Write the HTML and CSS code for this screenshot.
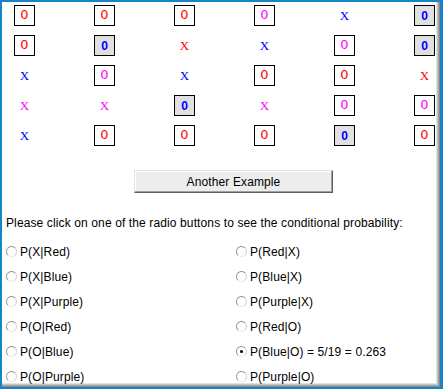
FILE: index.html
```html
<!DOCTYPE html>
<html lang="en">
<head>
    <meta charset="UTF-8">
    <title>Conditional Probability</title>
    <link rel="stylesheet" href="styles.css">
</head>
<body>
    <div class="frame">
        <div class="panel">
            <!-- board of symbols, 6 x 5 -->
            <div class="board">
                <span class="cell box r">O</span>
                <span class="cell box r">O</span>
                <span class="cell box r">O</span>
                <span class="cell box m">O</span>
                <span class="cell x b">X</span>
                <span class="cell box hl">0</span>

                <span class="cell box r">O</span>
                <span class="cell box hl">0</span>
                <span class="cell x r">X</span>
                <span class="cell x b">X</span>
                <span class="cell box m">O</span>
                <span class="cell box hl">0</span>

                <span class="cell x b">X</span>
                <span class="cell box m">O</span>
                <span class="cell x b">X</span>
                <span class="cell box r">O</span>
                <span class="cell box r">O</span>
                <span class="cell x r">X</span>

                <span class="cell x m">X</span>
                <span class="cell x m">X</span>
                <span class="cell box hl">0</span>
                <span class="cell x m">X</span>
                <span class="cell box m">O</span>
                <span class="cell box m">O</span>

                <span class="cell x b">X</span>
                <span class="cell box r">O</span>
                <span class="cell box r">O</span>
                <span class="cell box r">O</span>
                <span class="cell box hl">0</span>
                <span class="cell box r">O</span>
            </div>

            <button class="again">Another Example</button>

            <p class="prompt">Please click on one of the radio buttons to see the conditional probability:</p>

            <div class="choices">
                <label class="choice"><span class="radio"></span>P(X|Red)</label>
                <label class="choice"><span class="radio"></span>P(Red|X)</label>
                <label class="choice"><span class="radio"></span>P(X|Blue)</label>
                <label class="choice"><span class="radio"></span>P(Blue|X)</label>
                <label class="choice"><span class="radio"></span>P(X|Purple)</label>
                <label class="choice"><span class="radio"></span>P(Purple|X)</label>
                <label class="choice"><span class="radio"></span>P(O|Red)</label>
                <label class="choice"><span class="radio"></span>P(Red|O)</label>
                <label class="choice"><span class="radio"></span>P(O|Blue)</label>
                <label class="choice"><span class="radio checked"></span>P(Blue|O) = 5/19 = 0.263</label>
                <label class="choice"><span class="radio"></span>P(O|Purple)</label>
                <label class="choice"><span class="radio"></span>P(Purple|O)</label>
            </div>
        </div>
    </div>
</body>
</html>
```

FILE: styles.css
```css
html, body {
    margin: 0;
    padding: 0;
    background: #ffffff;
}

.frame {
    width: 443px;
    height: 389px;
    box-sizing: border-box;
    border-top: 2px solid #1883c6;
    border-left: 2px solid #1883c6;
    border-right: 3px solid #1883c6;
    border-bottom: 2px solid #1883c6;
    overflow: hidden;
}

.panel {
    height: 100%;
    background: #ffffff;
    box-shadow: inset -1px -1px 0 #8a8a8a, inset -2px -2px 0 #a6a6a6,
                inset -3px -3px 0 #c4c4c4, inset -4px -4px 0 #e2e2e2;
    font-family: "Liberation Sans", Arial, sans-serif;
    font-size: 12px;
    letter-spacing: 0.12px;
    color: #000;
    overflow: hidden;
}

/* board */
.board {
    display: grid;
    grid-template-columns: repeat(6, 21px);
    grid-auto-rows: 21px;
    column-gap: 59px;
    row-gap: 9px;
    padding: 3px 0 0 12px;
}

.cell {
    display: flex;
    align-items: center;
    justify-content: center;
    box-sizing: border-box;
    font-family: "Liberation Mono", "Courier New", monospace;
    font-size: 13px;
    line-height: 1;
    letter-spacing: 0;
}

.cell.x {
    font-family: "Liberation Serif", "Times New Roman", serif;
    font-size: 13px;
}

.box {
    border: 1px solid #000;
    background: #fff;
}

.hl {
    background: #e0e0e0;
    color: #0000ff;
    font-family: "Liberation Sans", Arial, sans-serif;
    font-size: 12px;
    font-weight: bold;
}

.r { color: #ff0000; }
.b { color: #0000ff; }
.m { color: #ff00ff; }

/* button */
.again {
    display: block;
    width: 199px;
    height: 23px;
    margin: 24px 0 0 132px;
    padding: 0;
    background: #ededed;
    border-top: 1px solid #e4e4e4;
    border-left: 1px solid #e4e4e4;
    border-right: 1px solid #5e5e5e;
    border-bottom: 1px solid #5e5e5e;
    box-shadow: inset -1px -1px 0 #a0a0a0, inset 1px 1px 0 #ffffff;
    font-family: "Liberation Sans", Arial, sans-serif;
    font-size: 12px;
    letter-spacing: 0.12px;
    color: #000;
}

.prompt {
    margin: 23px 0 0 4px;
    line-height: 15px;
}

/* radio choices */
.choices {
    display: grid;
    grid-template-columns: 230px 1fr;
    grid-auto-rows: 25px;
    margin-top: 8px;
    padding-left: 4px;
}

.choice {
    display: flex;
    align-items: center;
}

.radio {
    position: relative;
    width: 11px;
    height: 11px;
    box-sizing: border-box;
    margin-right: 3px;
    border-radius: 50%;
    border: 1px solid;
    border-color: #8c8c8c #d2d2d2 #e8e8e8 #9c9c9c;
    background: #ffffff;
}

.radio.checked::after {
    content: "";
    position: absolute;
    left: 3px;
    top: 3px;
    width: 3px;
    height: 3px;
    border-radius: 50%;
    background: #000;
}
```
